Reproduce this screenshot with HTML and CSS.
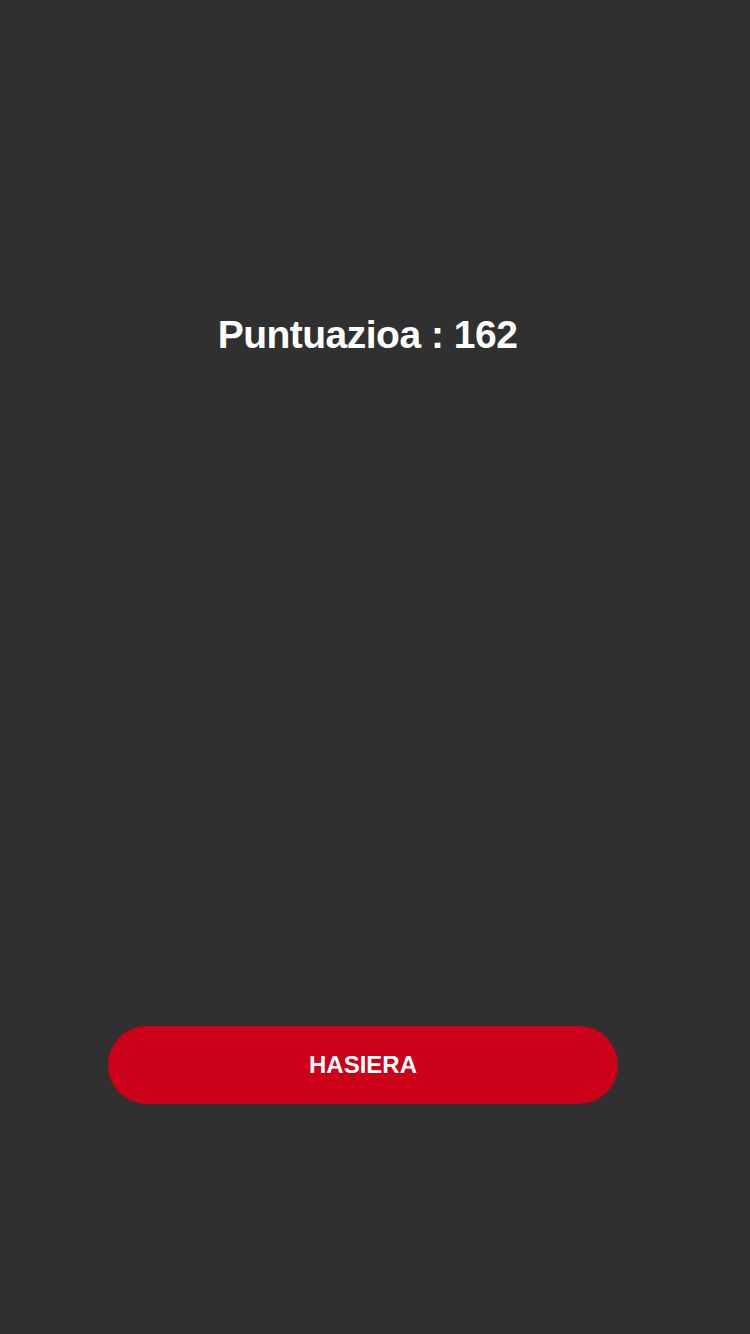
FILE: index.html
```html
<!DOCTYPE html>
<html>
<head>
<meta charset="utf-8">
<link rel="stylesheet" href="styles.css">
</head>
<body>
<main class="screen">
  <h1 class="score">Puntuazioa : 162</h1>
  <button class="home-btn">HASIERA</button>
</main>
</body>
</html>
```
FILE: styles.css
```css
html, body {
  margin: 0;
  padding: 0;
  background: #303030;
}
.screen {
  width: 750px;
  height: 1334px;
  display: flex;
  flex-direction: column;
  box-sizing: border-box;
  padding-top: 311px;
  font-family: "Liberation Sans", Arial, sans-serif;
}
.score {
  margin: 0;
  width: 735px;
  text-align: center;
  color: #ffffff;
  font-size: 39px;
  line-height: 48px;
  font-weight: bold;
  letter-spacing: -0.5px;
}
.home-btn {
  margin: 667px 0 0 108px;
  width: 510px;
  height: 78px;
  border: none;
  border-radius: 39px;
  background: #cc0019;
  color: #ffffff;
  font-family: "Liberation Sans", Arial, sans-serif;
  font-weight: bold;
  font-size: 24px;
  padding: 0;
}
```
